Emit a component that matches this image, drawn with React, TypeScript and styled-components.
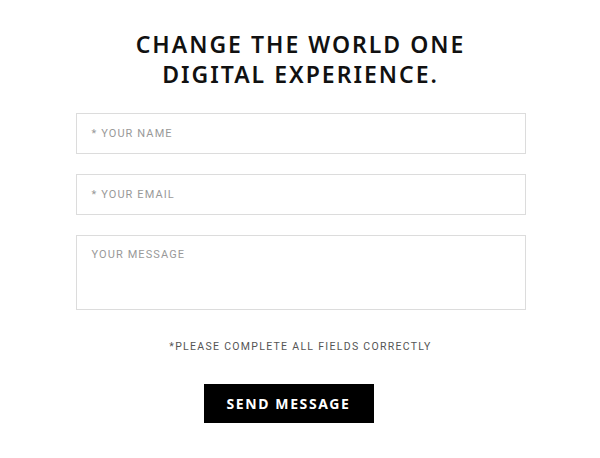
import React from "react";
import styled, { createGlobalStyle } from "styled-components";

const Global = createGlobalStyle`
  html, body { margin: 0; padding: 0; background: #fff; }
  * { box-sizing: border-box; }
`;

const Page = styled.div`
  width: 600px;
  height: 458px;
  display: flex;
  flex-direction: column;
  align-items: center;
  padding-top: 29px;
  padding-left: 1px;
`;

const Heading = styled.h1`
  margin: 0 0 24px;
  font-family: "Noto Sans", sans-serif;
  font-weight: 600;
  font-size: 23px;
  line-height: 30px;
  letter-spacing: 2px;
  color: #111;
  text-align: center;
  text-transform: uppercase;
`;

const Form = styled.form`
  width: 450px;
  display: flex;
  flex-direction: column;
  gap: 20px;
`;

const Field = styled.div<{ $tall?: boolean }>`
  height: ${(p) => (p.$tall ? 75 : 41)}px;
  border: 1px solid #dcdcdc;
  background: #fff;
  display: flex;
  align-items: ${(p) => (p.$tall ? "flex-start" : "center")};
  padding: ${(p) => (p.$tall ? "12px 15px" : "0 15px")};
  font-family: Roboto, sans-serif;
  font-size: 11px;
  letter-spacing: 1.1px;
  color: #999;
  text-transform: uppercase;
`;

const Note = styled.p`
  margin: 30px 0 0;
  font-family: Roboto, sans-serif;
  font-size: 10.5px;
  letter-spacing: 1.3px;
  color: #555;
  text-align: center;
`;

const Button = styled.button`
  margin: 31px 24px 0 0;
  width: 170px;
  height: 39px;
  border: 0;
  background: #000;
  color: #fff;
  font-family: "Noto Sans", sans-serif;
  font-weight: 700;
  font-size: 14px;
  letter-spacing: 1.6px;
  text-transform: uppercase;
  cursor: pointer;
`;

export default function App() {
  return (
    <>
      <Global />
      <Page>
        <Heading>
          Change the world one
          <br />
          digital experience.
        </Heading>
        <Form>
          <Field>* Your name</Field>
          <Field>* Your email</Field>
          <Field $tall>Your message</Field>
        </Form>
        <Note>*PLEASE COMPLETE ALL FIELDS CORRECTLY</Note>
        <Button type="button">Send message</Button>
      </Page>
    </>
  );
}
